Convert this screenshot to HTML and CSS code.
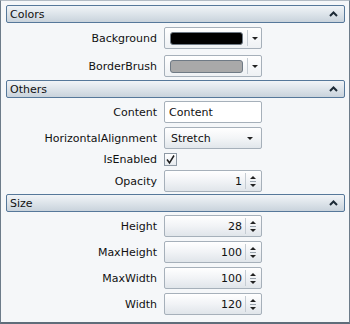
FILE: index.html
```html
<!DOCTYPE html>
<html lang="en">
<head>
  <meta charset="UTF-8" />
  <title>Property Grid</title>
  <link rel="stylesheet" href="styles.css">
</head>
<body>
  <div class="grid">
    <div class="group-header">
      <span>Colors</span>
      <svg class="chevron" width="9" height="6" viewBox="0 0 9 6"><polyline points="1,5 4.5,1.5 8,5" /></svg>
    </div>
    <div class="row row-tall">
      <div class="label">Background</div>
      <div class="editor color-editor">
        <div class="swatch swatch-black"></div>
        <div class="drop-btn"><span class="arrow-down"></span></div>
      </div>
    </div>
    <div class="row row-tall">
      <div class="label">BorderBrush</div>
      <div class="editor color-editor">
        <div class="swatch swatch-gray"></div>
        <div class="drop-btn"><span class="arrow-down"></span></div>
      </div>
    </div>

    <div class="group-header">
      <span>Others</span>
      <svg class="chevron" width="9" height="6" viewBox="0 0 9 6"><polyline points="1,5 4.5,1.5 8,5" /></svg>
    </div>
    <div class="row">
      <div class="label">Content</div>
      <div class="editor textbox">Content</div>
    </div>
    <div class="row">
      <div class="label">HorizontalAlignment</div>
      <div class="editor combo">
        <span class="combo-text">Stretch</span>
        <span class="arrow-down"></span>
      </div>
    </div>
    <div class="row row-short">
      <div class="label">IsEnabled</div>
      <div class="checkbox">
        <svg width="11" height="11" viewBox="0 0 11 11"><polyline points="2,5.5 4.5,9 9,1.5" /></svg>
      </div>
    </div>
    <div class="row">
      <div class="label">Opacity</div>
      <div class="editor spinner">
        <span class="value">1</span>
        <div class="spin-btns"><span class="arrow-up"></span><span class="spin-sep"></span><span class="arrow-down"></span></div>
      </div>
    </div>

    <div class="group-header">
      <span>Size</span>
      <svg class="chevron" width="9" height="6" viewBox="0 0 9 6"><polyline points="1,5 4.5,1.5 8,5" /></svg>
    </div>
    <div class="row">
      <div class="label">Height</div>
      <div class="editor spinner">
        <span class="value">28</span>
        <div class="spin-btns"><span class="arrow-up"></span><span class="spin-sep"></span><span class="arrow-down"></span></div>
      </div>
    </div>
    <div class="row">
      <div class="label">MaxHeight</div>
      <div class="editor spinner">
        <span class="value">100</span>
        <div class="spin-btns"><span class="arrow-up"></span><span class="spin-sep"></span><span class="arrow-down"></span></div>
      </div>
    </div>
    <div class="row">
      <div class="label">MaxWidth</div>
      <div class="editor spinner">
        <span class="value">100</span>
        <div class="spin-btns"><span class="arrow-up"></span><span class="spin-sep"></span><span class="arrow-down"></span></div>
      </div>
    </div>
    <div class="row">
      <div class="label">Width</div>
      <div class="editor spinner">
        <span class="value">120</span>
        <div class="spin-btns"><span class="arrow-up"></span><span class="spin-sep"></span><span class="arrow-down"></span></div>
      </div>
    </div>
  </div>
</body>
</html>
```

FILE: styles.css
```css
html, body {
  margin: 0;
  padding: 0;
  background: #ffffff;
  font-family: "DejaVu Sans", Verdana, sans-serif;
  font-size: 11px;
  color: #111;
}

.grid {
  width: 350px;
  height: 324px;
  box-sizing: border-box;
  background: #f5f7f9;
  border: 1px solid #6d7c8a;
  border-top-color: #b3bcc5;
  border-bottom: 2px solid #5f6d7a;
  padding: 4px 4px 0 5px;
}

.group-header {
  height: 18px;
  box-sizing: border-box;
  margin-bottom: 1px;
  border: 1px solid #56789a;
  border-radius: 2px;
  background: linear-gradient(#f1f4f7, #dde4ea 50%, #c9d3dc);
  display: flex;
  align-items: center;
  justify-content: space-between;
  padding: 0 6px 0 3px;
  color: #111;
}
.chevron polyline {
  fill: none;
  stroke: #1c2a36;
  stroke-width: 2;
}

.row {
  display: flex;
  align-items: center;
  height: 26px;
}
.row-tall {
  height: 28px;
}
.row-short {
  height: 17px;
}
.label {
  width: 151px;
  text-align: right;
  white-space: nowrap;
}

.editor {
  margin-left: 7px;
  width: 98px;
  height: 22px;
  box-sizing: border-box;
  border: 1px solid #a6b0ba;
  border-radius: 2px;
  display: flex;
  align-items: center;
}

.color-editor {
  background: linear-gradient(#ffffff, #eef1f4);
  padding-left: 5px;
}
.swatch {
  width: 73px;
  height: 13px;
  border-radius: 3px;
  border: 1px solid #6f7a85;
  box-sizing: border-box;
}
.swatch-black {
  background: #000;
}
.swatch-gray {
  background: #a9a9a9;
}
.drop-btn {
  margin-left: 4px;
  height: 16px;
  border-left: 1px solid #c5ccd3;
  flex: 1;
  display: flex;
  align-items: center;
  justify-content: center;
}

.arrow-down {
  width: 0;
  height: 0;
  border-left: 3px solid transparent;
  border-right: 3px solid transparent;
  border-top: 3px solid #222;
}
.arrow-up {
  width: 0;
  height: 0;
  border-left: 3px solid transparent;
  border-right: 3px solid transparent;
  border-bottom: 3px solid #222;
}

.textbox {
  background: #fff;
  padding-left: 4px;
}

.combo {
  background: linear-gradient(#ffffff, #f3f5f7 50%, #e1e6eb);
  padding: 0 8px 0 6px;
  justify-content: space-between;
}

.checkbox {
  margin-left: 7px;
  width: 13px;
  height: 13px;
  box-sizing: border-box;
  border: 1px solid #8e99a4;
  background: linear-gradient(#ffffff, #e7ebef);
  display: flex;
  align-items: center;
  justify-content: center;
}
.checkbox polyline {
  fill: none;
  stroke: #1f1f1f;
  stroke-width: 1.5;
}

.spinner {
  background: linear-gradient(#ffffff, #f1f3f6 50%, #e0e5ea);
  justify-content: flex-end;
}
.value {
  padding-right: 3px;
}
.spin-btns {
  width: 14px;
  height: 16px;
  border-left: 1px solid #c5ccd3;
  display: flex;
  flex-direction: column;
  align-items: center;
  justify-content: center;
  gap: 2px;
  margin-right: 1px;
}
.spin-sep {
  width: 6px;
  height: 1px;
  background: #9aa4ae;
}
```
